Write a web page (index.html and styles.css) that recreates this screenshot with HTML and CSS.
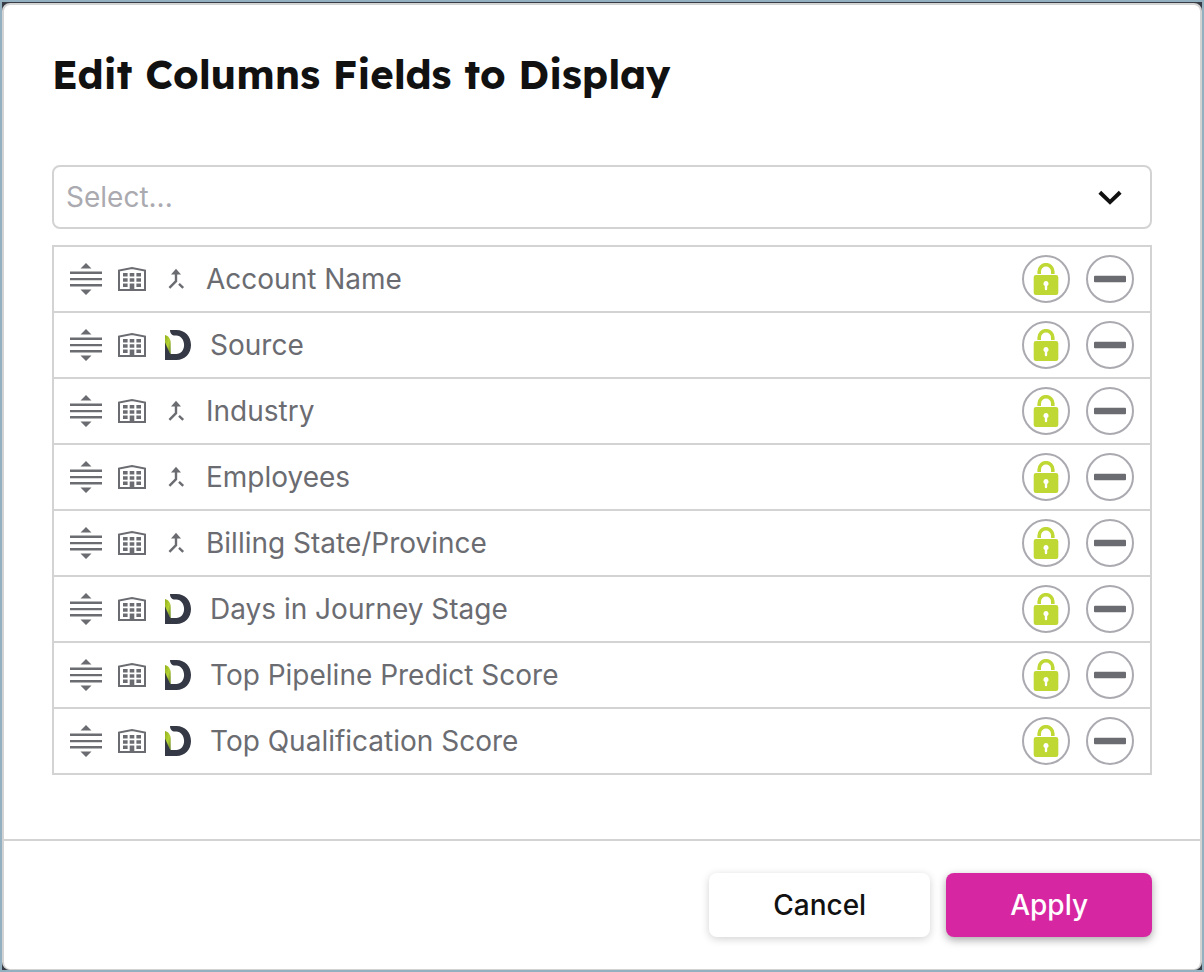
FILE: index.html
```html
<!DOCTYPE html>
<html lang="en">
  <head>
    <meta charset="UTF-8" />
    <meta name="viewport" content="width=device-width, initial-scale=1.0" />
    <title>Edit Columns Fields to Display</title>
    <link rel="stylesheet" href="styles.css">
  </head>
  <body>
    <!-- shared icons -->
    <svg class="sprite" aria-hidden="true">
      <defs>
        <linearGradient id="leaf" x1="0" y1="0" x2="1" y2="1">
          <stop offset="0" stop-color="#8fae1c" />
          <stop offset="0.5" stop-color="#b5d334" />
          <stop offset="1" stop-color="#5f7d22" />
        </linearGradient>
      </defs>
      <symbol id="icon-drag" viewBox="0 0 32 32">
        <path d="M16 0l5.500 5.500h-11zM16 32l5.500-5.500h-11zM0 8.500h32V11H0zM0 15h32v2.300H0zM0 21h32v2.500H0z" />
      </symbol>
      <symbol id="icon-building" viewBox="0 0 28 24">
        <path d="M1 23V3.600L14 1.100l13 2.500V23z" fill="none" stroke="currentColor" stroke-width="2" />
        <path d="M5 6h4.600v3.400H5zM11.700 6h4.600v3.400h-4.600zM18.400 6H23v3.400h-4.600zM5 11.300h4.600v3.400H5zM11.700 11.300h4.600v3.400h-4.600zM18.400 11.300H23v3.400h-4.600zM5 16.600h4.600V20H5zM11.700 16.600h4.600V23h-4.600zM18.400 16.600H23V20h-4.600z" />
      </symbol>
      <symbol id="icon-merge" viewBox="0 0 28 28">
        <path d="M14 3.800l5 5.700H9z" />
        <path d="M14 8v8.200l-6.600 6.600M17 18.800l4.200 4" fill="none" stroke="currentColor" stroke-width="2.400" />
      </symbol>
      <symbol id="icon-brand" viewBox="0 0 32 32">
        <path d="M8 1h6.500C23 1 29 7.500 29 16s-6 15-14.500 15H3V18l5.700 7h5.600c4.600 0 7.800-4 7.800-9s-3.200-9.500-7.800-9.500H13C10 6.500 8 4.500 8 1z" fill="#343945" />
        <path d="M3 6c3.600.8 5.700 4 5.700 8v12L3 16z" fill="url(#leaf)" />
        <path d="M3 13.500l5.700 12.500v5H3z" fill="#343945" />
      </symbol>
      <symbol id="icon-lock" viewBox="0 0 32 32">
        <path d="M9.200 11V8.500a6.800 6.800 0 0 1 13.600 0V11" fill="none" stroke="currentColor" stroke-width="3.600" />
        <path fill-rule="evenodd" d="M6 12h20a2.300 2.300 0 0 1 2.300 2.300v15.400A2.300 2.300 0 0 1 26 32H6a2.300 2.300 0 0 1-2.300-2.300V14.300A2.300 2.300 0 0 1 6 12zM16 18a2.600 2.600 0 0 0-1.200 4.900V26a1.200 1.200 0 0 0 2.400 0v-3.100A2.600 2.600 0 0 0 16 18z" />
      </symbol>
      <symbol id="icon-minus" viewBox="0 0 32 32">
        <rect y="12.700" width="32" height="6.600" rx="1" />
      </symbol>
    </svg>

    <main class="modal" role="dialog" aria-labelledby="modal-title">
      <div class="modal-body">
        <h1 class="modal-title" id="modal-title">Edit Columns Fields to Display</h1>

        <div class="select-wrap">
          <select class="select" aria-label="Select a field">
            <option>Select...</option>
          </select>
          <svg class="chevron" viewBox="0 0 24 16" aria-hidden="true">
            <path d="M1.800 3.300L12 13.100l10.200-9.800" />
          </svg>
        </div>

        <ul class="fields" id="fields"></ul>
      </div>

      <footer class="modal-footer">
        <button type="button" class="btn">Cancel</button>
        <button type="button" class="btn btn-primary">Apply</button>
      </footer>
    </main>

    <script src="script.js"></script>
  </body>
</html>
```
FILE: styles.css
```css
* {
  box-sizing: border-box;
}
body {
  display: flex;
  min-height: 100vh;
  margin: 0;
  padding-top: 1px;
  border: 2px solid #92b0bf;
  background-color: #383d45;
  font-family: Inter, "Liberation Sans", sans-serif;
  font-size: 28px;
  color: #6b6c71;
}
svg {
  display: block;
  flex: none;
  fill: currentColor;
}
.sprite {
  position: absolute;
  width: 0;
  height: 0;
}
.modal {
  display: flex;
  flex: 1;
  flex-direction: column;
  border: 2px solid #d3d3d3;
  border-bottom-width: 1px;
  border-radius: 8px;
  background: #fff;
}
.modal-body {
  flex: 1;
  padding: 44px 48px 64px;
}
.modal-title {
  margin: 0 0 66px;
  color: #111;
  font-family: Lexend, Inter, "Liberation Sans", sans-serif;
  font-size: 40px;
  font-weight: 700;
  line-height: 50px;
}
.select-wrap {
  position: relative;
  margin-bottom: 16px;
}
.select {
  display: block;
  width: 100%;
  height: 64px;
  padding: 0 64px 0 12px;
  border: 2px solid #d3d3d3;
  border-radius: 8px;
  background: #fff;
  color: #aaaab0;
  font: inherit;
  appearance: none;
}
.chevron {
  position: absolute;
  top: 24px;
  right: 30px;
  width: 24px;
  height: 16px;
  fill: none;
  stroke: #111;
  stroke-width: 4px;
  pointer-events: none;
}
.fields {
  margin: 0;
  padding: 0;
  border: 2px solid #d3d3d3;
  list-style: none;
}
.field {
  display: flex;
  align-items: center;
  gap: 16px;
  height: 64px;
  padding: 0 16px;
}
.field + .field {
  height: 66px;
  border-top: 2px solid #d3d3d3;
}
.field-name {
  flex: 1;
}
.icon-drag,
.icon-brand,
.icon-lock,
.icon-minus {
  width: 32px;
  height: 32px;
}
.icon-drag {
  cursor: grab;
}
.icon-building {
  width: 28px;
  height: 24px;
}
.icon-merge {
  width: 28px;
  height: 28px;
}
.round-btn {
  display: flex;
  align-items: center;
  justify-content: center;
  width: 48px;
  height: 48px;
  padding: 0;
  border: 2px solid #aaaab0;
  border-radius: 50%;
  background: #fff;
  color: #6b6c71;
  cursor: pointer;
}
.round-btn.lock {
  color: #bfd833;
}
.modal-footer {
  display: flex;
  justify-content: flex-end;
  gap: 16px;
  padding: 32px 48px;
  border-top: 2px solid #d3d3d3;
}
.btn {
  height: 64px;
  padding: 0 64px;
  border: none;
  border-radius: 8px;
  background: #fff;
  box-shadow: 0 2px 8px rgba(0, 0, 0, 0.18);
  color: #111;
  font: inherit;
  font-weight: 500;
  cursor: pointer;
}
.btn-primary {
  background: #d626a2;
  box-shadow: 0 3px 8px rgba(0, 0, 0, 0.35);
  color: #fff;
}
```
FILE: script.js
```javascript
var fields = [
  { name: 'Account Name', icon: 'merge' },
  { name: 'Source', icon: 'brand' },
  { name: 'Industry', icon: 'merge' },
  { name: 'Employees', icon: 'merge' },
  { name: 'Billing State/Province', icon: 'merge' },
  { name: 'Days in Journey Stage', icon: 'brand' },
  { name: 'Top Pipeline Predict Score', icon: 'brand' },
  { name: 'Top Qualification Score', icon: 'brand' }
];

function icon(name) {
  return '<svg class="icon-' + name + '" aria-hidden="true"><use href="#icon-' + name + '"></use></svg>';
}

document.getElementById('fields').innerHTML = fields.map(function (field) {
  return '<li class="field">' +
    icon('drag') + icon('building') + icon(field.icon) +
    '<span class="field-name">' + field.name + '</span>' +
    '<button type="button" class="round-btn lock" aria-label="Lock ' + field.name + '">' + icon('lock') + '</button>' +
    '<button type="button" class="round-btn" aria-label="Remove ' + field.name + '">' + icon('minus') + '</button>' +
    '</li>';
}).join('');
```
